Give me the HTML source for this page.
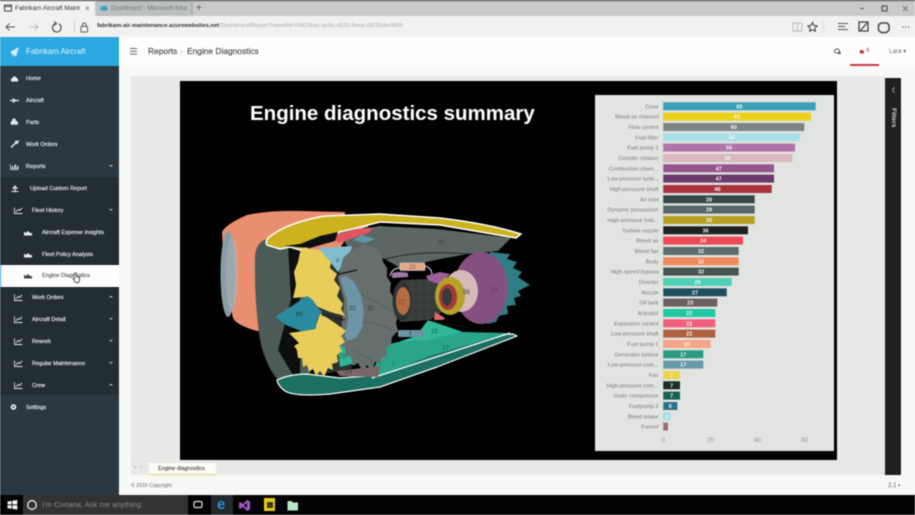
<!DOCTYPE html>
<html>
<head>
<meta charset="utf-8">
<style>
html,body{margin:0;padding:0;width:915px;height:515px;overflow:hidden;background:#f8f9f7;font-family:"Liberation Sans",sans-serif}
#p{position:relative;width:915px;height:515px;overflow:hidden;filter:blur(.5px)}
.a{position:absolute;white-space:nowrap}
.n{position:absolute;color:#e4e8e9;font-size:5.6px;-webkit-text-stroke:.18px #e4e8e9;line-height:10px;white-space:nowrap}
.c{position:absolute;left:109px;width:0;height:0;border-left:2.5px solid transparent;border-right:2.5px solid transparent;border-top:2.5px solid #a7adb0}
svg{position:absolute;left:0;top:0}
</style>
</head>
<body>
<div id="p">
<!-- browser chrome -->
<div class="a" style="left:0;top:0;width:915px;height:1px;background:#333"></div>
<div class="a" style="left:0;top:1px;width:915px;height:15px;background:#c9c9c7"></div>
<div class="a" style="left:0;top:1px;width:95px;height:15px;background:#f1f1f0"></div>
<div class="a" style="left:96px;top:1px;width:95px;height:15px;background:#bcc0c0"></div>
<div class="a" style="left:0;top:16px;width:915px;height:21px;background:#f1f1f0"></div>
<div class="a" style="left:15px;top:4px;font-size:6.3px;color:#333;line-height:10px">Fabrikam Aircraft Maint</div>
<div class="a" style="left:85px;top:3px;font-size:8px;color:#666;line-height:11px">×</div>
<div class="a" style="left:111px;top:4px;font-size:6.3px;color:#777;line-height:10px">Dashboard - Microsoft Azur</div>
<div class="a" style="left:196px;top:2px;font-size:10px;color:#555;line-height:13px">+</div>
<div class="a" style="left:97px;top:22px;font-size:5.8px;color:#333;line-height:9px;font-weight:bold">fabrikam-air-maintenance.azurewebsites.net<span style="color:#aaa;font-weight:normal">/Dashboard/Report?reportId=59d25bac-bc8a-4225-9eed-c8235decf869</span></div>
<!-- header -->
<div class="a" style="left:119px;top:37px;width:796px;height:28px;background:#fefefe"></div>
<div class="a" style="left:0;top:37px;width:119px;height:29px;background:#2ba8e0"></div>
<div class="a" style="left:26px;top:46px;font-size:7.9px;color:#e6f5fc;line-height:11px">Fabrikam Aircraft</div>
<div class="a" style="left:148px;top:46px;font-size:8.4px;color:#555;-webkit-text-stroke:.2px #555;line-height:11px">Reports</div>
<div class="a" style="left:180px;top:46px;font-size:8px;color:#aaa;line-height:11px">›</div>
<div class="a" style="left:187px;top:46px;font-size:8.4px;color:#555;-webkit-text-stroke:.2px #555;line-height:11px">Engine Diagnostics</div>
<div class="a" style="left:130px;top:48px;width:7px;height:1.2px;background:#666;box-shadow:0 2.800px 0 #666,0 5.600px 0 #666"></div>
<div class="a" style="left:850px;top:64px;width:29px;height:2px;background:#c23a42"></div>
<div class="a" style="left:866px;top:47px;font-size:6px;color:#c23a42;line-height:9px">4</div>
<div class="a" style="left:889px;top:47px;font-size:6.2px;color:#666;line-height:9px">Lara ▾</div>
<!-- report -->
<div class="a" style="left:131px;top:76px;width:754px;height:399px;background:#e9e9e7"></div>
<div class="a" style="left:180px;top:81px;width:657px;height:379px;background:#000"></div>
<div class="a" style="left:595px;top:95px;width:239px;height:356px;background:#e2e4e1"></div>
<div class="a" style="left:250px;top:101px;font-size:20.5px;font-weight:bold;color:#fff;line-height:26px">Engine diagnostics summary</div>
<div class="a" style="left:885px;top:78px;width:16px;height:397px;background:#1f201f"></div>
<div class="a" style="left:889px;top:108px;font-size:6.5px;font-weight:bold;color:#d5d5d5;line-height:8px;writing-mode:vertical-rl">Filters</div>
<div class="a" style="left:132px;top:460px;width:753px;height:15px;background:#e8e8e6"></div>
<div class="a" style="left:149px;top:463px;width:67px;height:11px;background:#fbfbf7;border-bottom:1px solid #e4d56a"></div>
<div class="a" style="left:158px;top:464px;font-size:5.600px;color:#555;-webkit-text-stroke:.15px #555;line-height:10px">Engine diagnostics</div>
<div class="a" style="left:134px;top:463px;font-size:7px;color:#aaa;line-height:10px">‹ &nbsp;›</div>
<div class="a" style="left:131px;top:482px;font-size:5.2px;color:#666;line-height:9px">© 2016 Copyright.</div>
<div class="a" style="left:888px;top:482px;font-size:6px;color:#555;line-height:9px">2.1 ▪</div>
<!-- sidebar -->
<div class="a" style="left:0;top:66px;width:119px;height:429px;background:#2c3841"></div>
<div class="a" style="left:0;top:177px;width:119px;height:218px;background:#232d34"></div>
<div class="a" style="left:0;top:265px;width:119px;height:22px;background:#fdfdfd;border-left:1px solid #2ba8e0;box-sizing:border-box"></div>
<div class="n" style="left:26px;top:74px">Home</div>
<div class="n" style="left:26px;top:96px">Aircraft</div>
<div class="n" style="left:26px;top:118px">Parts</div>
<div class="n" style="left:26px;top:140px">Work Orders</div>
<div class="n" style="left:26px;top:162px">Reports</div><div class="c" style="top:165px"></div>
<div class="n" style="left:30px;top:184px">Upload Custom Report</div>
<div class="n" style="left:32px;top:206px">Fleet History</div><div class="c" style="top:209px"></div>
<div class="n" style="left:42px;top:228px">Aircraft Expense Insights</div>
<div class="n" style="left:42px;top:250px">Fleet Policy Analysis</div>
<div class="n" style="left:42px;top:271px;color:#666;-webkit-text-stroke:.18px #666">Engine Diagnostics</div>
<div class="n" style="left:32px;top:293px">Work Orders</div><div class="c" style="top:296px"></div>
<div class="n" style="left:32px;top:315px">Aircraft Detail</div><div class="c" style="top:318px"></div>
<div class="n" style="left:32px;top:337px">Rework</div><div class="c" style="top:340px"></div>
<div class="n" style="left:32px;top:359px">Regular Maintenance</div><div class="c" style="top:362px"></div>
<div class="n" style="left:32px;top:381px">Crew</div><div class="c" style="top:384px"></div>
<div class="n" style="left:26px;top:403px">Settings</div>
<!-- taskbar -->
<div class="a" style="left:0;top:495px;width:915px;height:20px;background:#030303"></div>
<div class="a" style="left:23px;top:495px;width:165px;height:20px;background:#333331"></div>
<div class="a" style="left:42px;top:500px;font-size:7.6px;color:#8a8a88;line-height:10px">I'm Cortana. Ask me anything.</div>
<div class="a" style="left:211px;top:495px;width:22px;height:20px;background:#24282b;border-bottom:1px solid #6aa"></div>
<div class="a" style="left:217px;top:497px;font-size:15px;font-weight:bold;color:#2a8fd8;line-height:15px">e</div>

<svg width="915" height="515" viewBox="0 0 915 515">
  <!-- browser icons -->
  <rect x="4.500" y="5" width="7" height="6" fill="none" stroke="#444" stroke-width="1"/><path d="M4.500 6.500h7" stroke="#444"/>
  <ellipse cx="104" cy="8.500" rx="4" ry="2.500" fill="#3aa6c4"/>
  <path d="M192 2v13" stroke="#999"/>
  <path d="M15 27H6M9.500 23.500L6 27l3.500 3.500" fill="none" stroke="#555" stroke-width=".9"/>
  <path d="M38 27h-9M34.500 23.500L38 27l-3.500 3.500" fill="none" stroke="#bbb" stroke-width=".9"/>
  <path d="M59 24a4.300 4.300 0 1 1-3.500-.4" fill="none" stroke="#444" stroke-width="1.100"/><path d="M54 21.500l2.500 2-2.300 1.800" fill="none" stroke="#444"/>
  <path d="M74.500 21v12" stroke="#ccc"/>
  <rect x="81" y="26.500" width="6.500" height="5.500" fill="none" stroke="#555" stroke-width=".9"/><path d="M82.500 26.500v-2a1.800 1.800 0 0 1 3.500 0v2" fill="none" stroke="#555" stroke-width=".9"/>
  <!-- right browser icons -->
  <rect x="793" y="23" width="9" height="8" fill="none" stroke="#bbb" stroke-width="1"/><path d="M797.500 23v8" stroke="#bbb"/>
  <path d="M812.500 22.500l1.400 3 3.300.4-2.400 2.200.6 3.200-2.900-1.600-2.900 1.600.6-3.200-2.400-2.200 3.300-.4z" fill="none" stroke="#333" stroke-width=".9"/>
  <path d="M823.500 21v12" stroke="#ddd"/>
  <path d="M838 23.500h10M838 26.500h7M838 29.500h10" stroke="#555" stroke-width="1"/>
  <path d="M859 22h9v9h-9zM860 31l7-8" fill="none" stroke="#444" stroke-width="1.300"/>
  <path d="M881 23h6l2 2v5l-2.500 2.500h-5.500l-2.500-2.500v-5z" fill="none" stroke="#444" stroke-width="1.500"/>
  <path d="M902 27h1.500M905 27h1.500M908 27h1.500" stroke="#666"/>
  <path d="M860 8.500h4" stroke="#666"/>
  <rect x="882" y="6" width="5" height="5" fill="none" stroke="#555" stroke-width="1.200"/>
  <path d="M903 6l4.500 5M907.500 6l-4.500 5" stroke="#666" stroke-width=".9"/>
  <!-- header icons -->
  <path d="M10 52l9-5-3 10-2.500-2.500L12 57v-3.500z" fill="#d8eef9"/>
  <ellipse cx="837" cy="51" rx="2.500" ry="2" fill="none" stroke="#555" stroke-width="1"/><circle cx="839.500" cy="53" r="1.300" fill="#555"/>
  <path d="M860 50h2.500l1.500 1v2.500h-3.500l-1-1.500z" fill="#c23a42"/>
  <!-- sidebar icons -->
  <path d="M11 79l3.500-3 3.500 3v2.500h-7z" fill="#e8ecee"/>
  <path d="M10 100.500h9M13 98.500l2 2-2 2" fill="none" stroke="#e8ecee" stroke-width="1.300"/>
  <circle cx="12.500" cy="123" r="2" fill="#dfe3e4"/><circle cx="16" cy="123" r="2" fill="#dfe3e4"/><circle cx="14" cy="120.500" r="2" fill="#dfe3e4"/>
  <path d="M11 147.500l5-5M15 141.500h3l-1.500 2.500" stroke="#e8ecee" stroke-width="1.500" fill="none"/>
  <path d="M10.500 164v5.500h8" fill="none" stroke="#dfe3e4" stroke-width=".8"/><path d="M12 169v-3h1.500v3zM14.500 169v-4.500H16v4.500zM17 169v-3h1.500v3z" fill="#dfe3e4"/>
  <path d="M15 189v3M12.500 189l2.500-3 2.500 3M15 186v4" stroke="#e8ecee" stroke-width="1.200" fill="none"/><path d="M11.500 191.500h7" stroke="#e8ecee"/>
  <g fill="none" stroke="#dfe3e4" stroke-width=".9">
    <path d="M14.500 207.500v6h8M16 212l2-2.500 1.500 1 2.500-2.500"/>
    <path d="M14.500 294.500v6h8M16 299l2-2.500 1.500 1 2.500-2.500"/>
    <path d="M14.500 316.500v6h8M16 321l2-2.500 1.500 1 2.500-2.500"/>
    <path d="M14.500 338.500v6h8M16 343l2-2.500 1.500 1 2.500-2.500"/>
    <path d="M14.500 360.500v6h8M16 365l2-2.500 1.500 1 2.500-2.500"/>
    <path d="M14.500 382.500v6h8M16 387l2-2.500 1.500 1 2.500-2.500"/>
  </g>
  <path d="M24 235.500v-4l2 1.500 2-2 2 2 2 0v2.500z" fill="#e8ecee"/>
  <path d="M24 257.500v-4l2 1.500 2-2 2 2 2 0v2.500z" fill="#e8ecee"/>
  <path d="M24 278.500v-4l2 1.500 2-2 2 2 2 0v2.500z" fill="#444"/>
  <circle cx="13.500" cy="407" r="2.800" fill="#e8ecee"/><circle cx="13.500" cy="407" r="1" fill="#2c3841"/>
  <!-- cursor -->
  <path d="M74.500 274c0-1.500 2-1.500 2 0v2.500l3 .7v3.500l-1 2h-3l-2.500-4 1.500-.2z" fill="#f2f2f2" stroke="#333" stroke-width=".8"/>
  <!-- taskbar icons -->
  <path d="M7.500 501.500l4-.6v3.500h-4zM12.300 500.800l5-.8v4.400h-5zM7.500 505.200h4v3.500l-4-.6zM12.300 505.200h5v4.400l-5-.8z" fill="#f4f4f4"/>
  <circle cx="32" cy="505" r="4.300" fill="none" stroke="#e8e8e8" stroke-width="1.300"/>
  <rect x="194" y="501.500" width="8" height="6" rx="1.500" fill="none" stroke="#ddd" stroke-width="1.200"/>
  <path d="M240 502l3 2 4-4 3 1.500v8l-3 1.500-4-4-3 2-1-1v-5z" fill="#a05ac8"/><path d="M243.500 505.500l3.500 2.500v-5z" fill="#070707"/>
  <rect x="264" y="498" width="11" height="13" fill="#e5cb1e"/><rect x="267" y="502" width="6" height="6" fill="#3c3a1a"/>
  <path d="M287.500 501h4l1.500 1.500h5v8h-10.500z" fill="#b9e6c4"/>
</svg>

<!-- engine -->
<svg width="915" height="515" viewBox="0 0 915 515">
  <!-- nacelle -->
  <path d="M222 232Q226 224 247 215Q270 210 300 211L345 212L345 240L290 330L257 331Q236 325 233 318Q224 280 222 232Z" fill="#e98f6f"/>
  <ellipse cx="228" cy="274" rx="7.500" ry="43" fill="#8b9ca5"/>
  <ellipse cx="232" cy="274" rx="6" ry="38" fill="#a9b4b8" opacity=".55"/>
  <!-- casing -->
  <path d="M266 239Q256 243 255 256Q254 300 260 340Q266 368 280 382L310 385L310 240Z" fill="#4c5a58"/>
  <!-- inner dark -->
  <path d="M288 245L300 245L300 380L296 380L278 350L291 300Z" fill="#0c0f0e"/>
  <!-- backing behind fans -->
  <path d="M305 250L350 250L352 368L315 376Z" fill="#2b3130"/>
  <!-- top grey duct -->
  <path d="M338 232L380 226L437 229L511 238L498 251L468 254L440 259L400 268L385 259L350 250Z" fill="#5c6765"/>
  <path d="M385 259Q420 250 470 254" stroke="#232827" stroke-width="1" fill="none"/>
  <!-- upper yellow cowl -->
  <path d="M267 245Q264 240 272 235Q290 222 325 216L380 214L440 218Q490 224 521 234L516 238L440 225L380 222L340 232L318 244L300 250L290 247L280 249Z" fill="#ccb21e" stroke="#fff" stroke-width="1.500" stroke-linejoin="round"/>
  <path d="M332 236L360 228L373 228L368 233L338 243Z" fill="#e25561"/>
  <path d="M338 232L368 226" stroke="#f5e9e9" stroke-width="1.500"/>
  <path d="M353 240L362 235L375 239L365 243Z" fill="#5d98a8"/>
  <path d="M284 246L300 244L320 236L338 232L335 241L310 248Z" fill="#0e100f"/>
  <!-- light teal -->
  <path d="M318 248L352 246L350 254L338 272L330 262Z" fill="#7fbdcc"/>
  <!-- lower cowl -->
  <path d="M277 380Q290 374 307 374L340 378L380 375L430 352L470 335L513 334L517 336L437 367L380 387L330 394Q295 397 285 391Q278 386 277 380Z" fill="#1c7061" stroke="#fff" stroke-width="1.200" stroke-linejoin="round"/>
  <path d="M370 376L385 345L398 342L463 332L508 333L430 356L372 379Z" fill="#2aa58a"/>
  <path d="M372 378L430 359L510 333" stroke="#fff" stroke-width="1.300" fill="none"/>
  <!-- mauve block + teal -->
  <path d="M336 371L380 366L378 377L340 376Z" fill="#7a6666"/>
  <path d="M337 345L350 340L360 362L340 367Z" fill="#2fb495"/>
  <!-- grey fan -->
  <path d="M343 258L352 250L363 245L374 247L381 253L383 262L387 268L387 277L391 283L390 291L394 299L393 307L398 315L396 323L398 331L392 337L391 345L386 348L387 356L381 358L381 364L375 362L372 371L367 365L363 372L358 363L353 366L351 356L346 357L345 348L340 345L344 300L338 278Z" fill="#666f6d"/>
  <path d="M352 290Q375 300 393 312M352 322Q372 320 392 330M355 350L374 362" stroke="#525a58" stroke-width=".7" fill="none"/>
  <!-- blue-gray ring -->
  <path d="M340 278L346 276L354 282L361 295L364 312L362 328L356 338L347 341L345 335L348 320L347 300Z" fill="#6e95a5"/>
  <path d="M335 275L357 270" stroke="#1c1f1e" stroke-width="1.500"/>
  <!-- yellow fan -->
  <path d="M303 248L320 250L326 257L331 262L330 268L337 274L334 280L340 288L337 296L343 304L341 309L345 316L330 312L318 307L305 297L293 298L296 285L294 272L298 262L300 252Z" fill="#e9cd5a"/>
  <path d="M320 313L335 323L346 331L341 336L345 342L339 346L342 351L337 355L338 362L332 364L333 370L328 368L324 377L320 371L316 376L313 369L309 372L307 365L303 367L302 358L298 358L297 350L294 346L299 343L289 333L304 331L315 329Z" fill="#e9cd5a"/>
  <path d="M322 315L345 320" stroke="#201e10" stroke-width="1.200"/>
  <!-- cone -->
  <path d="M275 317L307 296L313 300L318 308L322 312L317 320L316 328L310 330L301 331L286 325Z" fill="#2a8ba0"/>
  <!-- teal turbine spikes -->
  <path d="M490 252L510 254L507 259L517 262L513 268L522 272L518 277L530 285L518 291L521 296L514 298L516 305L507 306L508 314L499 316L496 322L487 324L480 290Z" fill="#2f7c85"/>
  <!-- mauve turbine -->
  <ellipse cx="481" cy="288" rx="27" ry="36" fill="#84507f"/>
  <!-- core -->
  <path d="M400 280L430 279L442 288L442 312L430 320L400 322Z" fill="#3a3f3e"/>
  <path d="M416 280v41M424 280v40M432 282v36M394 294h46M394 302h46M394 310h46" stroke="#2a2e2d" stroke-width=".5"/>
  <ellipse cx="402" cy="301" rx="9.500" ry="20" fill="#2f3332"/>
  <ellipse cx="403" cy="301" rx="7" ry="14" fill="#b46d42"/>
  <!-- top pink tube -->
  <path d="M390 276Q392 268 400 268M425 266Q432 268 432 275" stroke="#ddd" stroke-width="1" fill="none"/>
  <rect x="400" y="263" width="25" height="7.500" rx="1" fill="#e6a688" stroke="#ddd" stroke-width=".6"/>
  <path d="M392 273Q400 271 408 273L408 277L392 278Z" fill="#9d7aa0"/>
  <path d="M426 276L440 272L450 274L440 285L428 280Z" fill="#9c5f9c"/>
  <!-- disks -->
  <ellipse cx="461" cy="291" rx="17" ry="21" fill="#d7b9b9"/>
  <ellipse cx="450" cy="296" rx="15" ry="19" fill="#b4a229"/>
  <ellipse cx="448" cy="297" rx="9" ry="13" fill="#a8393a"/>
  <ellipse cx="447" cy="297" rx="5" ry="9" fill="#3a3a3a"/>
  <path d="M435 312L445 318L443 320L434 320Z" fill="#d86a6a"/>
  <!-- lower core -->
  <path d="M398 342L416 336L428 320L463 332L427 340Z" fill="#2fb898"/>
  <rect x="398" y="330" width="27" height="7" rx="1.500" fill="#6e95a5"/>
  <path d="M428 320L470 328" stroke="#111" stroke-width="1"/>
  <!-- numbers -->
  <g font-family="Liberation Sans,sans-serif" font-size="6" fill="#2b3a3a">
    <text x="296" y="316">65</text><text x="336" y="262" font-size="5">3</text><text x="349" y="310">32</text>
    <text x="367" y="310">32</text><text x="339" y="358" fill="#1a5a4a">29</text><text x="345" y="373">23</text>
    <text x="438" y="244">32</text><text x="409" y="269" fill="#8a5a40">20</text><text x="431" y="333" fill="#1a5a4a">22</text>
    <text x="409" y="335" font-size="5">6</text><text x="442" y="350" fill="#155a4a">17</text><text x="392" y="366" font-size="5" fill="#155a4a">7</text>
    <text x="463" y="294">55</text><text x="491" y="292" fill="#5a2a5a">27</text><text x="398" y="304" fill="#7a4020">22</text>
  </g>
</svg>

<!-- chart -->
<svg width="915" height="515" viewBox="0 0 915 515" font-family="Liberation Sans,sans-serif">
  <path d="M663 100V432" stroke="#d0d2cf" stroke-width=".6"/>
  <rect x="663.300" y="102.300" width="152.400" height="8" fill="#3a9fb5"/>
  <rect x="663.300" y="112.600" width="147.700" height="8" fill="#edd01c"/>
  <rect x="663.300" y="123" width="141" height="8" fill="#7f8583"/>
  <rect x="663.300" y="133.300" width="136.700" height="8" fill="#a9e0e8"/>
  <rect x="663.300" y="143.600" width="131.700" height="8" fill="#b074a8"/>
  <rect x="663.300" y="154" width="129" height="8" fill="#d9b7bb"/>
  <rect x="663.300" y="164.300" width="110.700" height="8" fill="#96548f"/>
  <rect x="663.300" y="174.600" width="110.700" height="8" fill="#6b3a6b"/>
  <rect x="663.300" y="185" width="108.400" height="8" fill="#a8333d"/>
  <rect x="663.300" y="195.300" width="91.400" height="8" fill="#37474a"/>
  <rect x="663.300" y="205.600" width="91.400" height="8" fill="#56666a"/>
  <rect x="663.300" y="216" width="91.400" height="8" fill="#b5a024"/>
  <rect x="663.300" y="226.300" width="84.700" height="8" fill="#1d2120"/>
  <rect x="663.300" y="236.600" width="79.700" height="8" fill="#ee4a55"/>
  <rect x="663.300" y="247" width="75.400" height="8" fill="#5c6b6b"/>
  <rect x="663.300" y="257.300" width="75.400" height="8" fill="#ee8a5c"/>
  <rect x="663.300" y="267.600" width="75.400" height="8" fill="#465453"/>
  <rect x="663.300" y="278" width="68.400" height="8" fill="#4fcfb5"/>
  <rect x="663.300" y="288.300" width="63.400" height="8" fill="#1f4f5c"/>
  <rect x="663.300" y="298.600" width="54" height="8" fill="#6b5f5f"/>
  <rect x="663.300" y="309" width="52" height="8" fill="#1fc7a3"/>
  <rect x="663.300" y="319.300" width="52" height="8" fill="#f0607a"/>
  <rect x="663.300" y="329.600" width="52" height="8" fill="#b0603f"/>
  <rect x="663.300" y="340" width="47.400" height="8" fill="#f7a386"/>
  <rect x="663.300" y="350.300" width="40" height="8" fill="#2a9a80"/>
  <rect x="663.300" y="360.600" width="40" height="8" fill="#6799a8"/>
  <rect x="663.300" y="371" width="16.700" height="8" fill="#efd44f"/>
  <rect x="663.300" y="381.300" width="16.700" height="8" fill="#1f2b25"/>
  <rect x="663.300" y="391.600" width="16.700" height="8" fill="#17604f"/>
  <rect x="663.300" y="402" width="14" height="8" fill="#2a6f8a"/>
  <rect x="663.300" y="412.300" width="7" height="8" fill="#a0dbe8"/>
  <rect x="663.300" y="422.600" width="4.700" height="8" fill="#9a7070"/>
  <g font-size="5.600" fill="#7a7c7a" text-anchor="end">
    <text x="658.500" y="108.300">Cone</text>
    <text x="658.500" y="118.600">Bleed air channel</text>
    <text x="658.500" y="129">Flow control</text>
    <text x="658.500" y="139.300">Fuel filter</text>
    <text x="658.500" y="149.600">Fuel pump 2</text>
    <text x="658.500" y="160">Counter rotation</text>
    <text x="658.500" y="170.300">Combustion cham...</text>
    <text x="658.500" y="180.600">Low-pressure turbi...</text>
    <text x="658.500" y="191">High-pressure shaft</text>
    <text x="658.500" y="201.300">Air inlet</text>
    <text x="658.500" y="211.600">Dynamic pressurizer</text>
    <text x="658.500" y="222">High-pressure turb...</text>
    <text x="658.500" y="232.300">Turbine nozzle</text>
    <text x="658.500" y="242.600">Bleed air</text>
    <text x="658.500" y="253">Bleed fan</text>
    <text x="658.500" y="263.300">Body</text>
    <text x="658.500" y="273.600">High-speed bypass</text>
    <text x="658.500" y="284">Diverter</text>
    <text x="658.500" y="294.300">Nozzle</text>
    <text x="658.500" y="304.600">Oil tank</text>
    <text x="658.500" y="315">Actuator</text>
    <text x="658.500" y="325.300">Expansion control</text>
    <text x="658.500" y="335.600">Low-pressure shaft</text>
    <text x="658.500" y="346">Fuel pump 1</text>
    <text x="658.500" y="356.300">Generator turbine</text>
    <text x="658.500" y="366.600">Low-pressure com...</text>
    <text x="658.500" y="377">Fan</text>
    <text x="658.500" y="387.300">High-pressure com...</text>
    <text x="658.500" y="397.600">Outer compressor</text>
    <text x="658.500" y="408">Fuelpump 3</text>
    <text x="658.500" y="418.300">Bleed intake</text>
    <text x="658.500" y="428.600">Funnel</text>
  </g>
  <g font-size="5.600" font-weight="bold" fill="#f2f4f2" text-anchor="middle">
    <text x="739.500" y="108.300">65</text>
    <text x="737" y="118.600">63</text>
    <text x="733.800" y="129">60</text>
    <text x="731.600" y="139.300">58</text>
    <text x="729.100" y="149.600">56</text>
    <text x="727.800" y="160">55</text>
    <text x="718.600" y="170.300">47</text>
    <text x="718.600" y="180.600">47</text>
    <text x="717.500" y="191">46</text>
    <text x="709" y="201.300">39</text>
    <text x="709" y="211.600">39</text>
    <text x="709" y="222">39</text>
    <text x="705.600" y="232.300">36</text>
    <text x="703.100" y="242.600">34</text>
    <text x="701" y="253">32</text>
    <text x="701" y="263.300">32</text>
    <text x="701" y="273.600">32</text>
    <text x="697.500" y="284">29</text>
    <text x="695" y="294.300">27</text>
    <text x="690.300" y="304.600">23</text>
    <text x="689.300" y="315">22</text>
    <text x="689.300" y="325.300">22</text>
    <text x="689.300" y="335.600">22</text>
    <text x="687" y="346">20</text>
    <text x="683.300" y="356.300">17</text>
    <text x="683.300" y="366.600">17</text>
    <text x="671.600" y="377">7</text>
    <text x="671.600" y="387.300">7</text>
    <text x="671.600" y="397.600">7</text>
    <text x="670.300" y="408">6</text>
    <text x="666.800" y="418.300">3</text>
  </g>
  <g font-size="6" fill="#8f918f" text-anchor="middle">
    <text x="663.300" y="442">0</text><text x="710.500" y="442">20</text><text x="757.500" y="442">40</text><text x="804.500" y="442">60</text>
  </g>
  <path d="M894.500 87l-2 3 2 3" fill="none" stroke="#aaa" stroke-width=".9"/>
</svg>
</div>
</body>
</html>
